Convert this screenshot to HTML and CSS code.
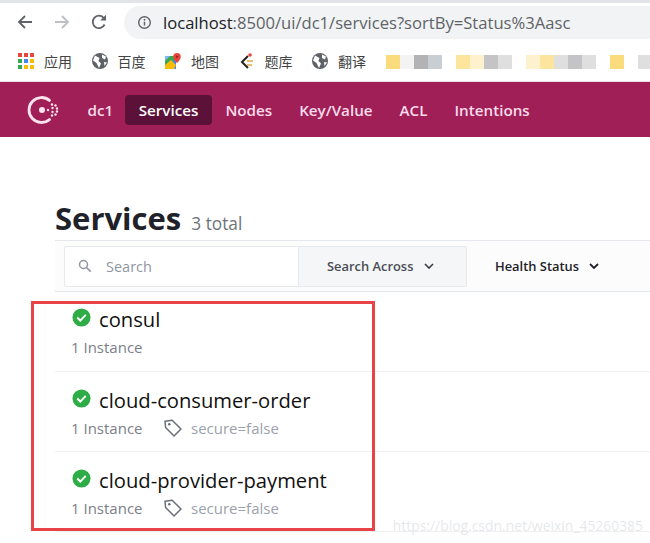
FILE: index.html
```html
<!DOCTYPE html>
<html lang="en">
<head>
<meta charset="utf-8">
<title>Services - Consul</title>
<link rel="stylesheet" href="styles.css">
</head>
<body>
<div class="chrome">
  <div class="toolbar">
    <svg class="tb-icon" viewBox="0 0 18 18"><path d="M16 9H3M9 3 3 9l6 6" fill="none" stroke="#5f6368" stroke-width="1.8"/></svg>
    <svg class="tb-icon" viewBox="0 0 18 18"><path d="M2 9h13M9 3l6 6-6 6" fill="none" stroke="#bcbfc4" stroke-width="1.8"/></svg>
    <svg class="tb-icon" viewBox="0 0 18 18"><path d="M14.6 11.5A6.2 6.2 0 1 1 13.6 4.8" fill="none" stroke="#5f6368" stroke-width="1.8"/><path d="M16 1.8V7.6h-5.8z" fill="#5f6368"/></svg>
    <div class="omnibox">
      <svg class="info" viewBox="0 0 16 16"><circle cx="8" cy="8" r="6.2" fill="none" stroke="#5f6368" stroke-width="1.5"/><path d="M8 7.2v4" stroke="#5f6368" stroke-width="1.6"/><circle cx="8" cy="5" r="1" fill="#5f6368"/></svg>
      <span class="url"><span class="url-host">localhost</span>:8500/ui/dc1/services?sortBy=Status%3Aasc</span>
    </div>
  </div>
  <div class="bookmarks">
    <div class="bm">
      <svg class="bm-icon" viewBox="0 0 16 16">
        <rect x="0" y="0" width="4" height="4" fill="#e8453c"/><rect x="6" y="0" width="4" height="4" fill="#e8453c"/><rect x="12" y="0" width="4" height="4" fill="#e8453c"/>
        <rect x="0" y="6" width="4" height="4" fill="#34a853"/><rect x="6" y="6" width="4" height="4" fill="#4285f4"/><rect x="12" y="6" width="4" height="4" fill="#fbbc05"/>
        <rect x="0" y="12" width="4" height="4" fill="#34a853"/><rect x="6" y="12" width="4" height="4" fill="#fbbc05"/><rect x="12" y="12" width="4" height="4" fill="#fbbc05"/>
      </svg>
      <span>应用</span>
    </div>
    <div class="bm">
      <svg class="bm-icon" viewBox="0 0 16 16"><circle cx="8" cy="8" r="8" fill="#5f6368"/><path d="M3 2.5 7.5 5 6.5 8 9 10.5 7 15 4.5 10 1 7.5zM10 1.5l4 2-1 3-3-1.5zM12 9l3 .5-2.5 3.5z" fill="#fff"/></svg>
      <span>百度</span>
    </div>
    <div class="bm">
      <svg class="bm-icon" viewBox="0 0 16 16"><path d="M0 3h11v13H0z" fill="#34a853"/><path d="M0 16 11 5v11z" fill="#4285f4"/><path d="M0 12 6 7l5 5-2 4H0z" fill="#fbbc05"/><path d="M0 3h5L0 8z" fill="#7bb6f5"/><path d="M12 0a3.800 3.800 0 0 1 3.800 3.800C15.800 6.600 12 10 12 10S8.200 6.600 8.200 3.800A3.800 3.800 0 0 1 12 0z" fill="#e8453c"/><circle cx="12" cy="3.800" r="1.300" fill="#a3281f"/></svg>
      <span>地图</span>
    </div>
    <div class="bm">
      <svg class="bm-icon" viewBox="0 0 16 16"><path d="M9 3 3 9l6 6" fill="none" stroke="#26221c" stroke-width="2"/><path d="M8 8h6" stroke="#e5a93c" stroke-width="1.5"/><path d="M8 12h5" stroke="#e5a93c" stroke-width="1.5"/><circle cx="11" cy="2" r="1.8" fill="#e8453c"/></svg>
      <span>题库</span>
    </div>
    <div class="bm">
      <svg class="bm-icon" viewBox="0 0 16 16"><circle cx="8" cy="8" r="8" fill="#5f6368"/><path d="M3 2.5 7.5 5 6.5 8 9 10.5 7 15 4.5 10 1 7.5zM10 1.5l4 2-1 3-3-1.5zM12 9l3 .5-2.5 3.5z" fill="#fff"/></svg>
      <span>翻译</span>
    </div>
    <div class="blur-group">
      <i class="px y1"></i><i class="px g0"></i><i class="px g2"></i><i class="px g3"></i><i class="gap"></i>
      <i class="px y2"></i><i class="px y3"></i><i class="px g2b"></i><i class="px g1"></i><i class="gap"></i>
      <i class="px y3"></i><i class="px y2"></i><i class="px g1"></i><i class="px g2b"></i><i class="px g1"></i><i class="gap"></i>
      <i class="px y1"></i><i class="gap"></i><i class="px g1"></i>
    </div>
  </div>
</div>

<nav class="nav">
  <svg class="logo" viewBox="0 0 33 33" fill="#fbe4ee">
    <path d="M22.500 7.400A12.500 12.500 0 1 0 22.500 26.600" fill="none" stroke="#fbe4ee" stroke-width="2.800" stroke-linecap="round"/>
    <circle cx="15" cy="17" r="3"/>
    <circle cx="21" cy="17" r="1.200"/>
    <circle cx="25" cy="11.500" r="1.200"/><circle cx="28.500" cy="12.500" r="1.200"/>
    <circle cx="25.500" cy="15" r="1.200"/><circle cx="30" cy="15.500" r="1.200"/>
    <circle cx="25.500" cy="19" r="1.200"/><circle cx="30" cy="18.500" r="1.200"/>
    <circle cx="25" cy="22.500" r="1.200"/><circle cx="28.500" cy="21.500" r="1.200"/>
  </svg>
  <a class="nav-item dc">dc1</a>
  <a class="nav-item active">Services</a>
  <a class="nav-item">Nodes</a>
  <a class="nav-item">Key/Value</a>
  <a class="nav-item">ACL</a>
  <a class="nav-item">Intentions</a>
</nav>

<main class="main">
  <h1 class="title">Services <small class="count">3 total</small></h1>
  <div class="filters">
    <div class="search">
      <svg class="search-icon" viewBox="0 0 14 14"><circle cx="5.5" cy="5.5" r="4" fill="none" stroke="#8f96a3" stroke-width="1.5"/><path d="m8.5 8.5 4.2 4.2" stroke="#8f96a3" stroke-width="1.7"/></svg>
      <span class="placeholder">Search</span>
    </div>
    <div class="across">
      <span>Search Across</span>
      <svg class="chev" viewBox="0 0 10 6"><path d="m1 1 4 4 4-4" fill="none" stroke="#373a42" stroke-width="1.6"/></svg>
    </div>
    <div class="health">
      <span>Health Status</span>
      <svg class="chev" viewBox="0 0 10 6"><path d="m1 1 4 4 4-4" fill="none" stroke="#1f2229" stroke-width="1.8"/></svg>
    </div>
  </div>

  <ul class="list">
    <li class="row">
      <div class="name-line">
        <svg class="check" viewBox="0 0 20 20"><circle cx="10" cy="10" r="9.5" fill="#2eac46"/><path d="m5.5 10 3.2 3.2 5.8-6" fill="none" stroke="#fff" stroke-width="2"/></svg>
        <span class="name">consul</span>
      </div>
      <div class="meta"><span class="inst">1 Instance</span></div>
    </li>
    <li class="row">
      <div class="name-line">
        <svg class="check" viewBox="0 0 20 20"><circle cx="10" cy="10" r="9.5" fill="#2eac46"/><path d="m5.5 10 3.2 3.2 5.8-6" fill="none" stroke="#fff" stroke-width="2"/></svg>
        <span class="name">cloud-consumer-order</span>
      </div>
      <div class="meta">
        <span class="inst">1 Instance</span>
        <svg class="tag" viewBox="0 0 20 20"><path d="M2 3.200 9.200 2.200 18 11l-7 7-8.400-8.500z" fill="none" stroke="#6b6f77" stroke-width="1.500" stroke-linejoin="round"/><circle cx="6.300" cy="6.300" r="1.300" fill="#6b6f77"/></svg>
        <span class="tagtext">secure=false</span>
      </div>
    </li>
    <li class="row">
      <div class="name-line">
        <svg class="check" viewBox="0 0 20 20"><circle cx="10" cy="10" r="9.5" fill="#2eac46"/><path d="m5.5 10 3.2 3.2 5.8-6" fill="none" stroke="#fff" stroke-width="2"/></svg>
        <span class="name">cloud-provider-payment</span>
      </div>
      <div class="meta">
        <span class="inst">1 Instance</span>
        <svg class="tag" viewBox="0 0 20 20"><path d="M2 3.200 9.200 2.200 18 11l-7 7-8.400-8.500z" fill="none" stroke="#6b6f77" stroke-width="1.500" stroke-linejoin="round"/><circle cx="6.300" cy="6.300" r="1.300" fill="#6b6f77"/></svg>
        <span class="tagtext">secure=false</span>
      </div>
    </li>
  </ul>
</main>

<div class="highlight"></div>
<div class="watermark">https://blog.csdn.net/weixin_45260385</div>
</body>
</html>
```
FILE: styles.css
```css
* { box-sizing: border-box; }
html, body { margin: 0; padding: 0; }
body {
  width: 650px;
  height: 543px;
  overflow: hidden;
  position: relative;
  background: #fff;
  font-family: "Open Sans", "Noto Sans", "Noto Sans CJK SC", sans-serif;
  color: #1f2229;
}

/* browser chrome */
.chrome { height: 82px; border-top: 3px solid #e3e4e7; border-bottom: 1px solid #eed9e2; }
.toolbar { display: flex; align-items: center; height: 37px; padding-left: 16px; }
.tb-icon { width: 18px; height: 18px; margin-right: 19px; flex: none; }
.tb-icon:nth-child(3) { margin-right: 16px; }
.omnibox {
  flex: 1;
  height: 33px;
  margin-top: 2px;
  margin-right: -30px;
  background: #f1f3f4;
  border-radius: 17px;
  display: flex;
  align-items: center;
  padding-left: 13px;
}
.info { width: 15px; height: 15px; margin-right: 11px; flex: none; }
.url { font-size: 16.620px; color: #5f6368; white-space: nowrap; }
.url-host { color: #202124; }

.bookmarks { display: flex; align-items: center; height: 41px; padding-left: 18px; white-space: nowrap; overflow: hidden; }
.bm { display: flex; align-items: center; gap: 10px; margin-right: 19.500px; font-size: 14px; color: #444; flex: none; }
.bm-icon { width: 16px; height: 16px; flex: none; }
.blur-group { display: flex; align-items: center; margin-top: 2px; flex: none; }
.px { display: block; width: 14px; height: 14px; }
.gap { display: block; width: 14px; height: 14px; }
.y1 { background: #fbdc7c; }
.y2 { background: #fde59e; }
.y3 { background: #fdf2cd; }
.g0 { background: #f3f3f3; }
.g1 { background: #dfdfe0; }
.g2 { background: #b3b3b5; }
.g2b { background: #c4c4c7; }
.g3 { background: #c8ced3; }

/* product nav */
.nav {
  height: 55px;
  background: #a01f57;
  display: flex;
  align-items: center;
  padding-left: 27px;
  font-size: 15.200px;
  font-weight: 600;
  color: #fbdcea;
}
.logo { width: 33px; height: 33px; flex: none; margin-right: 14px; }
.nav-item { display: block; padding: 5.500px 13.500px 4.500px; line-height: 20px; white-space: nowrap; }
.dc { padding-right: 12px; }
.active { background: #5c1238; color: #fff; border-radius: 4px; }

/* page */
.main { padding-left: 55px; }
.title { margin: 0; padding-top: 60px; height: 103px; font-size: 31px; line-height: 42px; font-weight: 700; color: #1f2229; white-space: nowrap; }
.count { font-size: 17.300px; font-weight: 400; color: #70747c; margin-left: 2px; }
.filters {
  display: flex;
  align-items: center;
  height: 52px;
  padding-left: 9px;
  background: #fcfcfd;
  border-top: 1px solid #e4e7ec;
  border-bottom: 1px solid #e1e6ea;
  font-size: 12.900px;
  font-weight: 600;
}
.search {
  width: 235px;
  height: 41px;
  display: flex;
  align-items: center;
  padding-left: 13px;
  background: #fff;
  border: 1px solid #e6e8ec;
  border-radius: 2px 0 0 2px;
}
.search-icon { width: 14px; height: 14px; margin-right: 14px; }
.placeholder { font-size: 14.500px; font-weight: 400; color: #8f96a3; }
.across {
  width: 168px;
  height: 41px;
  display: flex;
  align-items: center;
  padding-left: 28px;
  gap: 11px;
  background: #f5f6f8;
  border: 1px solid #e6e8ec;
  border-left: 0;
  color: #4a4d55;
  border-radius: 0 2px 2px 0;
}
.health { display: flex; align-items: center; gap: 10px; margin-left: 28px; color: #1f2229; }
.chev { width: 10px; height: 6px; }

.list { list-style: none; margin: 0; padding: 0; }
.row { height: 80px; padding: 16px 0 0 16px; border-bottom: 1px solid #eef0f2; }
.row:first-child { padding-top: 15px; }
.name-line { display: flex; align-items: center; height: 24px; }
.check { width: 19px; height: 19px; margin-left: 1px; margin-right: 8px; flex: none; position: relative; top: -2px; }
.name { font-size: 20.200px; line-height: 24px; color: #111; white-space: nowrap; font-weight: 500; }
.meta { display: flex; align-items: center; height: 20px; margin-top: 6px; font-size: 15px; color: #7c8088; }
.inst { width: 92px; white-space: nowrap; }
.tag { width: 20px; height: 20px; flex: none; margin-right: 8px; }
.tagtext { color: #9ca1ab; white-space: nowrap; }

/* screenshot annotations, lying over the page */
.highlight {
  position: absolute;
  left: 31px;
  top: 301px;
  width: 344px;
  height: 230px;
  border: 3px solid #ea4347;
}
.watermark {
  position: absolute;
  right: 7px;
  top: 516px;
  font-size: 13.900px;
  line-height: 20px;
  color: rgba(180, 185, 195, 0.35);
  white-space: nowrap;
}
```
